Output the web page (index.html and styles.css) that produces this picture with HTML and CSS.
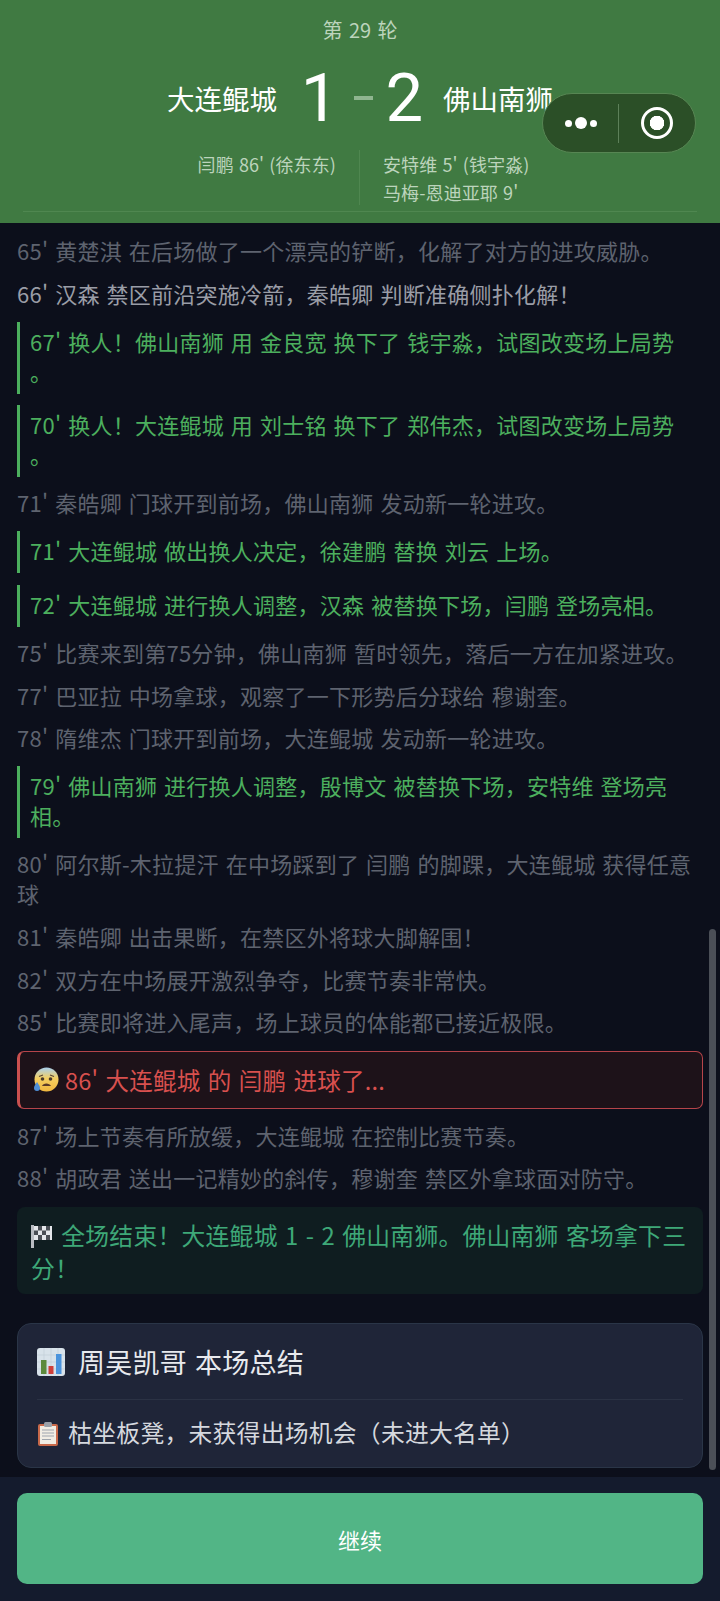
FILE: index.html
```html
<!DOCTYPE html>
<html lang="zh-CN">
<head>
    <meta charset="UTF-8">
    <meta name="viewport" content="width=device-width, initial-scale=1.0">
    <title>比赛直播</title>
    <link rel="stylesheet" href="styles.css">
</head>
<body>
    <div class="page">
        <header class="match-header">
            <div class="match-inner">
                <div class="round">第 29 轮</div>
                <div class="score-row">
                    <div class="team team-home">大连鲲城</div>
                    <div class="score"><span class="score-home">1</span><span class="score-dash"></span><span>2</span></div>
                    <div class="team team-away">佛山南狮</div>
                </div>
                <div class="scorers">
                    <div class="scorers-home">闫鹏 86' (徐东东)</div>
                    <div class="scorers-away">安特维 5' (钱宇淼)<br>马梅-恩迪亚耶 9'</div>
                </div>
            </div>
        </header>

        <!-- 小程序胶囊按钮 -->
        <div class="capsule">
            <div class="capsule-dots"><i></i><i class="big"></i><i></i></div>
            <div class="capsule-line"></div>
            <div class="capsule-target"><i></i></div>
        </div>

        <main class="events">
            <p class="event">65' 黄楚淇 在后场做了一个漂亮的铲断，化解了对方的进攻威胁。</p>
            <p class="event event-bright">66' 汉森 禁区前沿突施冷箭，秦皓卿 判断准确侧扑化解！</p>
            <p class="event-sub">67' 换人！佛山南狮 用 金良宽 换下了 钱宇淼，试图改变场上局势<br>。</p>
            <p class="event-sub">70' 换人！大连鲲城 用 刘士铭 换下了 郑伟杰，试图改变场上局势<br>。</p>
            <p class="event">71' 秦皓卿 门球开到前场，佛山南狮 发动新一轮进攻。</p>
            <p class="event-sub">71' 大连鲲城 做出换人决定，徐建鹏 替换 刘云 上场。</p>
            <p class="event-sub">72' 大连鲲城 进行换人调整，汉森 被替换下场，闫鹏 登场亮相。</p>
            <p class="event">75' 比赛来到第75分钟，佛山南狮 暂时领先，落后一方在加紧进攻。</p>
            <p class="event">77' 巴亚拉 中场拿球，观察了一下形势后分球给 穆谢奎。</p>
            <p class="event">78' 隋维杰 门球开到前场，大连鲲城 发动新一轮进攻。</p>
            <p class="event-sub">79' 佛山南狮 进行换人调整，殷博文 被替换下场，安特维 登场亮相。</p>
            <p class="event event-long">80' 阿尔斯-木拉提汗 在中场踩到了 闫鹏 的脚踝，大连鲲城 获得任意球</p>
            <p class="event">81' 秦皓卿 出击果断，在禁区外将球大脚解围！</p>
            <p class="event">82' 双方在中场展开激烈争夺，比赛节奏非常快。</p>
            <p class="event">85' 比赛即将进入尾声，场上球员的体能都已接近极限。</p>
            <p class="event-goal">
                <svg class="emoji" viewBox="0 0 26 26" width="26" height="26">
                    <defs>
                        <linearGradient id="faceFill" x1="0" y1="0" x2="0" y2="1">
                            <stop offset="0" stop-color="#a9cfee"/>
                            <stop offset="0.45" stop-color="#f4cf62"/>
                            <stop offset="1" stop-color="#f0b63e"/>
                        </linearGradient>
                    </defs>
                    <circle cx="13.5" cy="12.5" r="12" fill="url(#faceFill)"/>
                    <path d="M6 9.5l4-1.5M21 9.5l-4-1.5" stroke="#5b4632" stroke-width="1.2" fill="none"/>
                    <circle cx="9.5" cy="12" r="1.8" fill="#4a3a2c"/>
                    <circle cx="17.5" cy="12" r="1.8" fill="#4a3a2c"/>
                    <path d="M9 19c1-3.4 7.6-3.4 9 0z" fill="#5b3a28"/>
                    <path d="M4 15c-2 3-3 4.500-3 6a3 3 0 0 0 6 0c0-1.500-1-3-3-6z" fill="#4f8fd6"/>
                </svg>
                <span>86' 大连鲲城 的 闫鹏 进球了...</span>
            </p>
            <p class="event">87' 场上节奏有所放缓，大连鲲城 在控制比赛节奏。</p>
            <p class="event">88' 胡政君 送出一记精妙的斜传，穆谢奎 禁区外拿球面对防守。</p>
            <p class="event-final">
                <svg class="emoji-flag" viewBox="0 0 21 23" width="21" height="23">
                    <rect x="0" y="0" width="3" height="23" fill="#b9bcc2"/>
                    <path d="M3 1h18v14H3z" fill="#e4e6ea"/>
                    <path d="M7 1h4v4.500H7zM15 1h4v4.500h-4zM3 5.500h4V10H3zM11 5.500h4V10h-4zM7 10h4v5H7zM15 10h4v5h-4z" fill="#4a4e55"/>
                </svg>
                全场结束！大连鲲城 1 - 2 佛山南狮。佛山南狮 客场拿下三分！
            </p>

            <section class="summary">
                <h2 class="summary-title">
                    <svg class="emoji-title" viewBox="0 0 28 28" width="28" height="28">
                        <rect x="0" y="0" width="28" height="28" rx="3" fill="#d8e2ea"/>
                        <path d="M0 7h28M0 14h28M0 21h28M7 0v28M14 0v28M21 0v28" stroke="#c3ced8" stroke-width="0.7"/>
                        <rect x="4" y="12" width="5.500" height="14" fill="#5d8a3c"/>
                        <rect x="11.500" y="18" width="5" height="8" fill="#cf3f3a"/>
                        <rect x="19" y="6" width="5.500" height="20" fill="#4b93dc"/>
                    </svg>
                    周吴凯哥 本场总结
                </h2>
                <p class="summary-text">
                    <svg class="emoji-clip" viewBox="0 0 20 24" width="20" height="24">
                        <rect x="0" y="2" width="20" height="22" rx="2" fill="#c8694a"/>
                        <rect x="2" y="4" width="16" height="18" fill="#f1ede4"/>
                        <rect x="6" y="0" width="8" height="5" rx="1.500" fill="#9aa0a8"/>
                        <path d="M4 8h12M4 11h12M4 14h12M4 17.500h9" stroke="#9fa5ad" stroke-width="1.200"/>
                    </svg>
                    枯坐板凳，未获得出场机会（未进大名单）
                </p>
            </section>
        </main>

        <div class="scrollbar"></div>

        <footer class="footer">
            <button class="btn-continue" type="button">继续</button>
        </footer>
    </div>
</body>
</html>
```

FILE: styles.css
```css
* {
    box-sizing: border-box;
}
body {
    margin: 0;
    background-color: #0c0f1b;
    font-family: "Noto Sans CJK SC", "Noto Sans", sans-serif;
}
.page {
    position: relative;
    height: 1601px;
    display: flex;
    flex-direction: column;
    overflow: hidden;
}

/* Cabecera del partido */
.match-header {
    height: 223px;
    flex-shrink: 0;
    padding: 18px 23px 0;
    background-color: #407a42;
    color: #fff;
}
.match-inner {
    height: 194px;
    border-bottom: 1px solid #4f8750;
}
.round {
    font-size: 20px;
    line-height: 24px;
    text-align: center;
    word-spacing: 2px;
    color: #bcd4bc;
}
.score-row {
    display: grid;
    grid-template-columns: 1fr 166px 1fr;
    align-items: center;
    height: 70px;
    margin-top: 21px;
}
.team {
    font-size: 27.5px;
    line-height: 40px;
}
.team-home {
    text-align: right;
}
.score {
    display: flex;
    justify-content: center;
    align-items: center;
    font-family: Roboto, sans-serif;
    font-size: 67px;
    line-height: 70px;
}
.score-home {
    margin-left: 4px;
}
.score-dash {
    width: 19px;
    height: 4px;
    margin: 0 13px 0 15px;
    background-color: #8fb58f;
}
.scorers {
    display: grid;
    grid-template-columns: 1fr 1fr;
    margin-top: 17px;
    font-size: 18px;
    line-height: 28px;
    letter-spacing: 0.1px;
    word-spacing: 1px;
    color: #bcd4bc;
}
.scorers-home {
    padding-right: 23px;
    text-align: right;
    border-right: 1px solid #4f8750;
    height: 55px;
}
.scorers-away {
    padding-left: 23px;
}

/* Boton flotante */
.capsule {
    position: absolute;
    top: 93px;
    left: 542px;
    width: 154px;
    height: 60px;
    display: flex;
    align-items: center;
    background-color: #2b4f27;
    border: 1px solid #578653;
    border-radius: 30px;
}
.capsule-dots {
    width: 75px;
    display: flex;
    justify-content: center;
    align-items: center;
    gap: 3px;
}
.capsule-dots i {
    width: 7px;
    height: 7px;
    border-radius: 50%;
    background-color: #fff;
}
.capsule-dots i.big {
    width: 12px;
    height: 12px;
}
.capsule-line {
    width: 1px;
    height: 39px;
    background-color: #5d8059;
}
.capsule-target {
    flex: 1;
    display: flex;
    justify-content: center;
}
.capsule-target i {
    width: 32px;
    height: 32px;
    border: 3px solid #fff;
    border-radius: 50%;
    background: radial-gradient(circle, #fff 0, #fff 7px, transparent 7.5px);
}

/* Lista de eventos */
.events {
    flex: 1;
    min-height: 0;
    overflow: hidden;
    display: flex;
    flex-direction: column;
    gap: 6.6px;
    padding: 11px 17px 0;
    font-size: 22px;
    letter-spacing: 0.25px;
    word-spacing: 1.7px;
}
.events p {
    margin: 0;
}
.event {
    height: 36px;
    line-height: 32px;
    color: #5e636f;
}
.event-bright {
    color: #9a9da6;
}
.event-long {
    height: 66px;
    line-height: 30px;
}
.event-sub {
    margin: 2.5px 0 !important;
    padding: 4px 0 8px 10px;
    border-left: 3px solid #4caf5e;
    line-height: 30px;
    color: #4caf5e;
}
.event-goal {
    height: 58px;
    margin: 3px 0 !important;
    display: flex;
    align-items: center;
    gap: 6px;
    padding-left: 13px;
    font-size: 23.5px;
    color: #d8504e;
    background-color: #1d1219;
    border: 1px solid #b5444a;
    border-left: 3px solid #c9504f;
    border-radius: 7px;
}
.event-final {
    height: 87px;
    margin-top: 3px !important;
    padding: 11px 10px 11px 14px;
    font-size: 23.8px;
    line-height: 33px;
    color: #3ea878;
    background-color: #0f1d20;
    border-radius: 8px;
}
.emoji-flag {
    margin-right: 2px;
    vertical-align: -3px;
}
.emoji-clip {
    margin: 0 3px 0 1px;
    vertical-align: -4px;
}

/* Resumen */
.summary {
    flex-shrink: 0;
    height: 145px;
    margin-top: 23px;
    padding: 0 19px;
    background-color: #1f2538;
    border: 1px solid #2a3547;
    border-radius: 14px;
}
.summary-title {
    height: 76px;
    margin: 0;
    display: flex;
    align-items: center;
    gap: 13px;
    font-size: 27px;
    font-weight: 400;
    color: #e8eaee;
    border-bottom: 1px solid #2b3244;
}
.summary-text {
    margin-top: 14px !important;
    font-size: 23.8px;
    line-height: 36px;
    color: #d5d8de;
}

.scrollbar {
    position: absolute;
    top: 929px;
    left: 709px;
    width: 7px;
    height: 541px;
    background-color: #4b4f57;
    border-radius: 4px;
}

/* Pie */
.footer {
    flex-shrink: 0;
    padding: 16px 17px 17px;
    background-color: #141b2d;
}
.btn-continue {
    display: block;
    width: 100%;
    height: 91px;
    border: none;
    border-radius: 10px;
    background-color: #52b586;
    color: #fff;
    font-family: inherit;
    font-size: 22px;
}
```
